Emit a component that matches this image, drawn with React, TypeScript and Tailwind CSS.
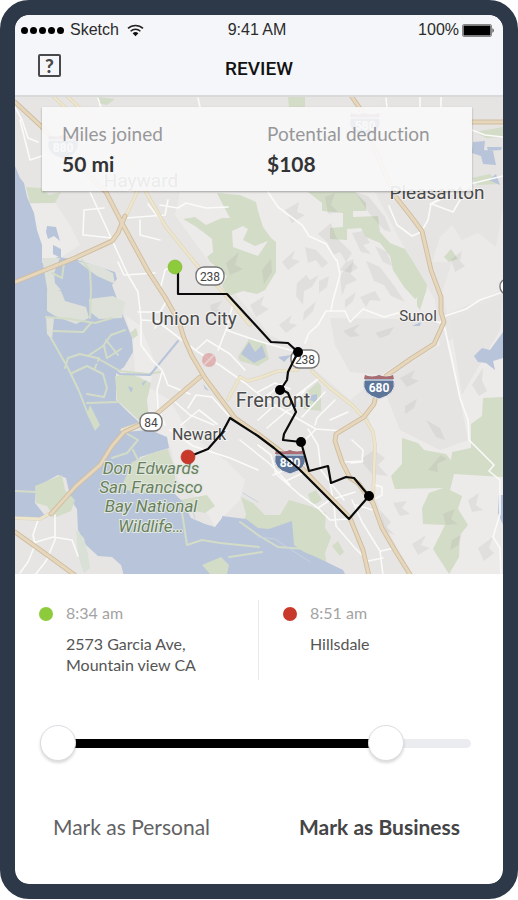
import { useState } from "react";

const MAJOR_ROADS = [
  "M15 102 L42 127 L70 158 L106 192 L123 225 L148 271 L165 297 L179 322 L184 338 L192 356 L205 378 L235 418 L258 434 L300 466 L350 518 L363 550 L369 576",
  "M15 282 L75 258 L112 241 L118 233 L125 216",
  "M200 377 L160 411 L148 421 L124 432 L112 446 L100 465 L76 486 L51 514",
  "M15 532 L50 557 L76 576",
  "M352 97 L363 113 L375 150 L395 196 L410 215 L422 231 L431 270 L441 297 L441 312 L444 322 L434 344 L412 358 L386 376 L376 394 L374 404 L364 417 L336 434 L335 441 L342 462 L350 478 L358 483 L373 503 L382 528 L396 552 L411 576",
  "M472 122 L503 122",
];

const YELLOW_ROADS = [
  "M68 97 L92 120 L128 160 L146 192 L166 227 L200 269 L222 291 L250 325",
  "M54 97 L72 114 M137 192 L125 218",
  "M240 377 L248 381 L262 377 L278 371 L298 370 M312 371 L330 388 L352 405 L366 420 L373 432 L375 445 L373 500",
  "M240 377 L228 399 M15 518 L40 519 L52 512",
  "M148 421 L122 430",
];

const WHITE_ROADS = [
  "M90 192 L107 229 L128 275 L138 292 L141 320 L141 345 L152 360 L162 370 L168 385 L190 394",
  "M83 235 L84 210 L104 208 M84 235 L112 238 M126 218 L165 215 L168 200 M140 220 L140 235 L160 240 M148 204 L162 222",
  "M142 320 L157 321 L178 337 L198 352 L221 366 L245 383 L266 400 L300 420 L316 429 L344 431",
  "M118 262 L124 275 L155 273 M138 312 L160 312 L166 302 M161 286 L165 270 L177 264 M155 328 L162 318",
  "M218 350 L226 330 L233 304 M226 330 L258 341 L297 352 M196 350 L207 340 L230 354 L245 370",
  "M162 372 L157 390 L158 408 L165 425 M175 402 L190 415 L214 425 M188 408 L196 395 L212 397 L229 416 M181 425 L199 410 L217 424 M170 430 L193 446 L230 458 L258 470",
  "M503 292 L480 300 L466 309 L445 316 L440 323 L428 318 L398 313 L384 317 L363 309 L350 322 L345 311 L326 311 L318 325 L309 333 L305 343",
  "M444 325 L452 360 L460 398 L468 420 L469 440 L482 453 L494 465 L489 471 L500 480 L500 514 L493 537 L500 548 L501 575",
  "M337 260 L340 275 L333 300 L331 311 M268 192 L278 207 L302 225 L309 236 L326 244 L336 260",
  "M15 107 L22 120 L28 138 L38 142 M20 120 L30 160 L45 155 M98 98 L101 108 M198 98 L200 107",
  "M386 98 L387 108 M420 107 L420 97 M441 97 L441 107 M389 206 L397 225 L412 236 L421 232 L428 220 L431 204 L450 195 M432 204 L453 212 L460 200 M430 204 L470 184 L503 176 M472 130 L485 135 L503 137",
  "M305 440 L316 429 M315 425 L317 418 L335 400 M302 417 L325 392 M290 410 L305 390 M308 429 L318 445 L321 470 L330 482 L344 500",
  "M258 445 L271 455 L276 474 L300 495 L318 508 L330 500 L355 492 M273 475 L297 465 M286 481 L305 472 M240 440 L270 464 L290 485",
  "M330 483 L334 505 L336 526 L355 548 L367 560 M352 500 L362 522 L380 551 L383 575 M368 561 L383 558 M381 551 L394 548 M318 508 L330 520 L349 519 M345 462 L363 461 M352 440 L363 450 L362 462 L351 463",
  "M375 485 L382 487 L382 495 L373 500 M356 505 L373 510 M258 392 L275 383 L290 389 M259 402 L282 384 M258 420 L275 405 M267 428 L288 410 M330 420 L348 412 M296 396 L318 379",
  "M38 520 L33 535 L35 545 L28 562 L20 573 M55 515 L55 540 L46 561 L35 575 M33 543 L53 537 L72 540 L78 556",
  "M160 205 L178 208 L186 203 L206 208 L228 207",
];

const HILL_SHADES = [
  "M355 192 L368 196 L385 217 L391 232 L384 230 L368 212 Z",
  "M318 234 L331 223 L336 237 L352 253 L346 262 L340 252 L333 255 L328 243 Z",
  "M346 262 L354 259 L351 273 L340 270 Z",
  "M305 247 L316 250 L328 263 L322 268 L316 260 L308 263 Z",
  "M297 283 L306 275 L310 280 L319 275 L312 287 L304 291 L303 305 L296 296 Z",
  "M340 275 L353 262 L358 268 L350 273 L357 280 L346 285 L342 296 Z",
  "M366 261 L380 267 L395 287 L405 302 L391 296 L384 285 L374 281 Z",
  "M360 297 L375 291 L381 301 L370 300 L366 307 Z",
  "M282 262 L295 250 L292 259 L300 261 L288 270 Z",
  "M285 210 L299 202 L297 212 L305 215 L292 223 Z",
  "M360 460 L374 450 L385 458 L378 465 L388 476 L372 474 Z",
  "M428 470 L441 455 L447 459 L437 464 L438 472 Z",
  "M393 503 L407 501 L402 508 L410 514 L400 516 Z",
  "M412 544 L426 535 L421 545 L430 548 L418 555 Z",
  "M472 385 L483 368 L482 381 L487 391 L479 396 Z",
  "M343 331 L360 324 L354 331 L360 336 L350 337 Z",
  "M375 333 L394 327 L389 335 L380 338 Z",
  "M426 420 L440 428 L445 440 L436 437 Z",
  "M451 259 L462 251 L460 261 L465 266 L455 272 Z",
  "M478 548 L493 537 L489 548 L494 553 L484 561 Z",
  "M250 305 L264 296 L261 305 L269 309 L256 317 Z",
  "M279 325 L292 315 L289 323 L297 325 L286 333 Z",
  "M400 378 L415 370 L411 378 L419 381 L407 387 Z",
  "M325 197 L335 193 L331 205 L338 212 L328 214 Z",
  "M352 233 L363 231 L370 243 L363 245 L371 254 L361 252 Z",
  "M375 246 L387 252 L392 266 L383 262 Z",
  "M262 270 L271 259 L272 272 L264 284 Z",
  "M226 263 L239 252 L235 265 L243 269 L230 275 Z",
  "M210 305 L222 301 L217 309 L224 313 L212 316 Z",
  "M304 312 L316 301 L313 311 L303 321 Z",
  "M413 190 L421 185 L420 195 L414 198 Z",
  "M405 406 L417 399 L414 408 L405 414 Z",
  "M443 514 L455 509 L451 519 L458 524 L446 525 Z",
  "M452 540 L462 534 L458 545 L450 550 Z",
  "M468 500 L479 493 L476 505 L483 510 L472 512 Z",
  "M380 510 L391 522 L387 527 L395 535 L384 531 Z",
  "M345 300 L356 292 L353 301 L345 308 Z",
  "M319 281 L329 276 L327 287 L319 293 Z",
];

const GREENS = [
  "M183 219 L195 217 L206 225 L222 218 L230 218 L222 203 L217 193 L240 195 L256 202 L258 211 L263 227 L271 238 L276 242 L276 272 L265 290 L257 294 L243 291 L228 296 L222 286 L227 276 L210 262 L207 257 L213 252 L212 239 L203 232 L195 226 Z",
  "M308 192 L355 192 L366 203 L366 211 L353 211 L353 217 L378 216 L380 232 L390 243 L405 249 L412 260 L427 285 L426 292 L415 299 L404 287 L393 270 L390 256 L380 243 L366 237 L361 228 L347 229 L347 240 L330 239 L330 228 L343 227 L343 213 L322 211 L322 203 Z",
  "M417 298 L426 291 L420 310 L417 306 Z",
  "M288 97 L305 97 L305 107 L289 107 Z M98 97 L115 99 L107 105 L98 103 Z",
  "M26 187 L41 188 L49 195 L61 192 L55 203 L30 203 Z",
  "M180 500 L207 495 L215 506 L205 513 L185 509 Z",
  "M241 497 L253 503 L265 515 L280 515 L289 500 L310 506 L326 513 L325 528 L331 537 L325 553 L328 574 L300 572 L285 558 L258 548 L240 535 L246 514 Z",
  "M402 438 L418 443 L424 450 L446 454 L451 460 L452 452 L471 448 L471 424 L482 416 L483 398 L503 397 L503 477 L454 474 L450 490 L462 496 L458 509 L468 525 L460 535 L459 557 L449 574 L433 549 L445 525 L423 524 L422 508 L429 493 L443 488 L395 489 L391 476 L402 464 Z",
  "M301 397 L318 382 L321 386 L321 411 L304 409 Z",
  "M238 357 L249 339 L265 343 L269 359 L258 366 L240 361 Z",
  "M86 405 L96 414 L101 427 L94 431 L87 419 Z M130 333 L136 328 L138 335 L133 339 Z",
  "M451 249 L458 259 L449 262 L444 257 Z M475 132 L503 127 L503 137 L486 138 Z M472 178 L490 174 L500 184 L477 185 Z",
  "M308 494 L316 490 L322 500 L312 506 Z M332 546 L338 541 L344 552 L340 556 Z",
];

const CLEARINGS = [
  "M232 231 L243 226 L248 229 L243 240 L255 246 L268 241 L258 256 L244 251 L233 247 Z",
];

const WATERS = [
  "M15 166 L20 178 L24 183 L27 197 L34 213 L37 230 L42 245 L42 263 L58 257 L78 260 L96 266 L115 272 L117 279 L112 285 L116 296 L124 318 L132 338 L133 352 L124 367 L116 373 L116 400 L129 413 L140 423 L124 432 L150 430 L167 437 L169 448 L140 457 L130 470 L138 492 L175 494 L184 503 L191 518 L205 524 L215 527 L222 518 L240 532 L258 545 L287 557 L300 566 L332 574 L124 576 L121 565 L112 557 L98 556 L86 545 L78 530 L77 509 L71 500 L66 478 L58 475 L36 487 L35 503 L47 518 L15 518 Z",
  "M222 516 L246 519 L258 528 L269 529 L292 521 L294 545 L304 552 L316 557 L343 570 L346 576 L225 576 Z",
  "M474 356 L482 348 L490 350 L503 332 L503 358 L493 361 L495 370 L486 363 L478 362 Z",
  "M473 142 L485 141 L484 150 L493 151 L496 165 L483 164 L481 156 L472 153 Z M487 147 L502 147 L501 150 L488 151 Z",
  "M489 180 L496 174 L500 185 Z M241 354 L249 342 L255 352 L262 345 L266 357 L254 363 Z",
  "M309 396 L317 394 L317 403 L310 400 Z M278 357 L291 355 L284 362 Z M499 495 L503 495 L503 525 L498 513 Z",
  "M47 226 L56 227 L60 241 L54 236 L48 239 L46 232 Z M53 245 L61 249 L61 258 L53 254 Z",
  "M412 326 L421 322 L420 326 Z M203 384 L209 391 L205 389 Z",
];

const PONDS = [
  "M47 290 L61 291 L65 301 L86 307 L89 318 L76 324 L55 316 L47 311 Z",
  "M89 299 L113 296 L125 302 L122 318 L99 319 L90 312 Z",
  "M46 317 L54 318 L52 340 L47 334 Z",
  "M42 258 L60 258 L54 273 L55 283 L61 290 L48 294 Z",
  "M77 261 L99 266 L113 273 L115 284 L97 276 Z",
];

const MARSHES = [
  "M121 488 L132 462 L155 452 L168 449 L175 470 L175 494 L136 493 Z",
  "M35 486 L62 475 L65 490 L75 500 L71 511 L54 518 L47 506 L36 503 Z",
  "M90 405 L100 425 L95 431 L87 414 Z",
  "M115 376 L131 374 L151 383 L147 400 L149 421 L141 422 L117 400 Z",
  "M202 565 L221 557 L229 565 L227 574 L210 574 Z",
];

const LEVEES = [
  "M46 317 L70 319 L95 323 L112 318",
  "M52 273 L62 278 L64 263 M82 260 L90 271 L91 290 L90 318",
  "M51 338 L60 354 L68 368 L79 391 L88 414",
  "M65 368 L68 358 L80 354 L97 358 L120 371 L148 374 L160 372",
  "M88 356 L103 346 L111 335 L125 330 M104 346 L107 358 L121 349 M106 340 L118 355",
  "M72 373 L87 366 L103 374 L107 388 L104 397 L87 394 M87 403 L119 402",
  "M53 331 L83 332 L91 323 M99 358 L95 368",
  "M124 432 L138 440 L127 453 L112 458 M133 450 L139 462",
  "M181 506 L187 545 L202 540 L220 543 L259 547 M229 557 L262 552",
  "M15 491 L36 492 M240 522 L258 535 L278 547 L320 550",
];

const ROUTE =
  "M178 267 L178 294 L227 294 L271 342 L288 343 L298 352 L288 372 L287 380 L281 389 L288 393 L296 412 L284 434 L283 440 L301 442 L309 471 L328 466 L331 483 L346 477 L354 478 L369 496 L349 519 L298 468 L274 448 L258 436 L230 418 L222 433 L208 449 L188 457";

const STOPS = [
  [298, 352],
  [280, 390],
  [301, 442],
  [369, 496],
];

function RoutePill({ x, y, label, width }: { x: number; y: number; label: string; width: number }) {
  return (
    <g>
      <rect x={x - width / 2} y={y - 9} width={width} height={18} rx={8} fill="#fff" stroke="#777" strokeWidth={1.4} />
      <text x={x} y={y + 5} textAnchor="middle" fontSize={12} fill="#444">
        {label}
      </text>
    </g>
  );
}

function InterstateShield({ x, y, label }: { x: number; y: number; label: string }) {
  return (
    <g transform={`translate(${x} ${y})`}>
      <path d="M-14 -12 Q-7 -9 0 -12 Q7 -9 14 -12 L15 -6 Q18 7 0 12 Q-18 7 -15 -6 Z" fill="#5d7598" stroke="#e8e8ec" />
      <path d="M-14 -12 Q-7 -9 0 -12 Q7 -9 14 -12 L15 -8 L-15 -8 Z" fill="#a96c70" />
      <path d="M-15 -7 H15" stroke="#fff" strokeWidth={1} />
      <text y={5} textAnchor="middle" fontSize={12} fontWeight={700} fill="#fff">
        {label}
      </text>
    </g>
  );
}

function Place({ x, y, size, children }: { x: number; y: number; size: number; children: string }) {
  return (
    <text
      x={x}
      y={y}
      textAnchor="middle"
      fontSize={size}
      fill="#4b4b4b"
      stroke="#f3f2f1"
      strokeWidth={2}
      paintOrder="stroke"
    >
      {children}
    </text>
  );
}

function TripMap() {
  return (
    <svg
      viewBox="15 97 488 477"
      className="block h-auto w-full font-['Roboto',sans-serif]"
      role="img"
      aria-label="Trip route map"
    >
      <rect x={15} y={97} width={488} height={477} fill="#e6e5e4" />
      <path d="M180 192 L375 192 L400 240 L435 300 L440 345 L375 380 L350 400 L310 365 L290 345 L270 335 L215 270 L175 215 Z" fill="#ecebe9" />
      <path d="M382 395 L420 365 L450 340 L503 297 L503 574 L412 574 L385 525 L375 495 L376 440 L368 415 Z" fill="#ecebe9" />
      <path d="M330 318 L440 320 L432 345 L380 375 L350 372 L335 345 Z M380 97 L503 97 L503 262 L432 262 L395 192 Z M450 320 L503 296 L500 330 L462 395 Z M382 385 L436 350 L446 340 L460 400 L468 440 L440 450 L400 430 Z" fill="#e5e4e3" />
      <path d="M452 262 L503 262 L503 290 L447 314 L442 292 Z M440 237 L452 225 L462 240 L478 233 L496 247 L503 208 L503 262 L432 262 Z" fill="#ebeae8" />
      <path d="M30 204 L55 203 L70 225 L80 245 L60 258 L42 258 Z M145 385 L170 400 L190 435 L225 460 L245 480 L240 500 L222 518 L215 527 L200 500 L178 480 L170 445 L150 425 Z" fill="#ecebe9" />
      <path d="M125 315 L140 325 L155 362 L150 385 L135 372 L133 340 Z" fill="#ecebe9" />
      {GREENS.map((d) => (
        <path key={d} d={d} fill="#d3dcc7" />
      ))}
      {CLEARINGS.map((d) => (
        <path key={d} d={d} fill="#ecebe9" />
      ))}
      {WATERS.map((d) => (
        <path key={d} d={d} fill="#b8c4d9" />
      ))}
      {PONDS.map((d) => (
        <path key={d} d={d} fill="#dde1d9" />
      ))}
      {MARSHES.map((d) => (
        <path key={d} d={d} fill="#d3dcc7" />
      ))}
      <path d="M128 386 L133 388 L131 393 Z M142 383 L147 380 L143 386 Z" fill="#b8c4d9" />
      <path d="M76 530 L84 538 L88 555 L90 568 L84 573 L78 555 Z" fill="#d9e0d6" />
      {HILL_SHADES.map((d) => (
        <path key={d} d={d} fill="#8c8c8c" fillOpacity={0.12} />
      ))}
      <g fill="none" strokeLinejoin="round" strokeLinecap="round">
        {LEVEES.map((d) => (
          <path key={d} d={d} stroke="#d3dcc7" strokeWidth={2} />
        ))}
        <path d="M72 370 L80 359 L96 362 L120 374 L150 375 L178 341" stroke="#b8c4d9" strokeWidth={2} />
        <path d="M190 503 L195 518 M243 493 L258 502 M258 537 L275 539 L310 562" stroke="#c9d2df" strokeWidth={1} />
        {WHITE_ROADS.map((d) => (
          <path key={d} d={d} stroke="#fafaf9" strokeWidth={1.6} />
        ))}
        {YELLOW_ROADS.map((d) => (
          <path key={d} d={d} stroke="#ddd5bd" strokeWidth={3.6} />
        ))}
        {YELLOW_ROADS.map((d) => (
          <path key={d} d={d} stroke="#eee6cc" strokeWidth={2.4} />
        ))}
        {MAJOR_ROADS.map((d) => (
          <path key={d} d={d} stroke="#cfbd9f" strokeWidth={4.8} />
        ))}
        {MAJOR_ROADS.map((d) => (
          <path key={d} d={d} stroke="#e6d6bb" strokeWidth={3} />
        ))}
      </g>
      <circle cx={209} cy={360} r={7} fill="#dda9a9" fillOpacity={0.85} />
      <path d="M204 365 L214 355" stroke="#e9cccc" strokeWidth={2} />

      <RoutePill x={210} y={276} label="238" width={28} />
      <RoutePill x={305} y={359} label="238" width={28} />
      <RoutePill x={151} y={422} label="84" width={22} />
      <rect x={500} y={279} width={20} height={15} rx={7} fill="#fff" stroke="#777" strokeWidth={1.4} />
      <InterstateShield x={379} y={387} label="680" />
      <InterstateShield x={290} y={462} label="880" />
      <InterstateShield x={63} y={147} label="880" />
      <InterstateShield x={365} y={125} label="580" />

      <Place x={141} y={187} size={19}>Hayward</Place>
      <Place x={437} y={199} size={19}>Pleasanton</Place>
      <Place x={194} y={325} size={19}>Union City</Place>
      <Place x={418} y={321} size={15}>Sunol</Place>
      <Place x={273} y={407} size={20}>Fremont</Place>
      <Place x={199} y={440} size={16}>Newark</Place>
      <text
        textAnchor="middle"
        fontSize={17}
        fontStyle="italic"
        fill="#68805c"
        stroke="#e3e9e2"
        strokeWidth={2}
        paintOrder="stroke"
      >
        <tspan x={151} y={474}>Don Edwards</tspan>
        <tspan x={151} y={493}>San Francisco</tspan>
        <tspan x={151} y={512}>Bay National</tspan>
        <tspan x={151} y={532}>Wildlife…</tspan>
      </text>

      <path d={ROUTE} fill="none" stroke="#0b0b0b" strokeWidth={2.2} strokeLinejoin="round" />
      {STOPS.map(([x, y]) => (
        <circle key={y} cx={x} cy={y} r={5} fill="#000" />
      ))}
      <circle cx={175} cy={267} r={7} fill="#8ecb3c" stroke="#79b32c" strokeWidth={0.6} />
      <circle cx={188} cy={457} r={7} fill="#c8392c" stroke="#b03226" strokeWidth={0.6} />
    </svg>
  );
}

function StatusBar() {
  return (
    <div className="grid h-[30px] grid-cols-3 items-center pr-2 pl-[6px] font-['Liberation_Sans',sans-serif] text-base text-[#2b2b2c]">
      <div className="flex items-center">
        <div className="flex gap-[2px]">
          {[0, 1, 2, 3, 4].map((n) => (
            <span key={n} className="size-[7px] rounded-full bg-black" />
          ))}
        </div>
        <span className="ml-[6px]">Sketch</span>
        <svg viewBox="0 0 17 13" className="ml-2 h-[13px] w-[17px]" aria-hidden="true">
          <g fill="none" stroke="#222" strokeWidth={1.5}>
            <path d="M1 4.4 A11 11 0 0 1 16 4.4" />
            <path d="M3.6 7.2 A7 7 0 0 1 13.4 7.2" />
          </g>
          <path d="M5.6 9.2 A4.4 4.4 0 0 1 11.4 9.2 L8.5 12.2 Z" fill="#111" />
        </svg>
      </div>
      <span className="pr-[2px] text-center">9:41 AM</span>
      <div className="flex items-center justify-end gap-[3px]">
        <span>100%</span>
        <svg viewBox="0 0 33 13" className="h-[13px] w-[33px]" aria-hidden="true">
          <rect x={0.5} y={0.5} width={29} height={12} rx={1.5} fill="#f5f6f9" stroke="#888" />
          <rect x={1.5} y={1.5} width={27} height={10} fill="#000" />
          <path d="M30.5 4 Q33 6.5 30.5 9 Z" fill="#333" />
        </svg>
      </div>
    </div>
  );
}

function Stop({ color, time, lines }: { color: string; time: string; lines: string[] }) {
  return (
    <div className="flex gap-[13px] pl-6">
      <span className={`mt-[7px] size-[14px] shrink-0 rounded-full ${color}`} />
      <div className="pb-[5px] text-base">
        <div className="leading-[26px] text-[#a3a3a3]">{time}</div>
        <address className="mt-[7px] leading-[21px] text-[#555] not-italic">
          {lines.map((line) => (
            <div key={line}>{line}</div>
          ))}
        </address>
      </div>
    </div>
  );
}

const THUMB =
  "pointer-events-none absolute inset-0 m-0 h-9 w-full appearance-none bg-transparent outline-none [&::-webkit-slider-thumb]:pointer-events-auto [&::-webkit-slider-thumb]:size-9 [&::-webkit-slider-thumb]:appearance-none [&::-webkit-slider-thumb]:rounded-full [&::-webkit-slider-thumb]:border [&::-webkit-slider-thumb]:border-[#dcdce2] [&::-webkit-slider-thumb]:bg-white [&::-webkit-slider-thumb]:shadow-[0_2px_3px_rgba(0,0,0,0.15)]";

function TripRange() {
  const [from, setFrom] = useState(0);
  const [to, setTo] = useState(83);
  return (
    <div className="relative mt-[45px] mr-8 ml-[25px] flex h-9 items-center">
      <div className="h-[9px] w-full rounded-full bg-[#ebecf0] px-[18px]">
        <div className="h-[9px] bg-black" style={{ marginLeft: `${from}%`, width: `${to - from}%` }} />
      </div>
      <input
        type="range"
        aria-label="Trip start"
        value={from}
        onChange={(e) => setFrom(Math.min(Number(e.target.value), to))}
        className={THUMB}
      />
      <input
        type="range"
        aria-label="Trip end"
        value={to}
        onChange={(e) => setTo(Math.max(Number(e.target.value), from))}
        className={THUMB}
      />
    </div>
  );
}

export default function App() {
  return (
    <main className="overflow-hidden rounded-[29px] border-[15px] border-[#2d3949] bg-[#2d3949] font-['Lato',sans-serif] [font-variant-ligatures:none]">
      <div className="overflow-hidden rounded-[14px] bg-white">
        <header className="border-b-2 border-[#d9d9da] bg-[#f5f6f9]">
          <StatusBar />
          <div className="grid h-[50px] grid-cols-[1fr_auto_1fr] items-start px-[23px]">
            <button
              type="button"
              aria-label="Help"
              className="mt-[9px] flex size-[23px] items-center justify-center rounded-[2px] border-2 border-[#49494b] text-[19px] leading-none font-black text-[#49494b]"
            >
              ?
            </button>
            <h1 className="pt-[10px] font-['Roboto',sans-serif] text-[19px] leading-7 font-medium text-[#121212]">
              REVIEW
            </h1>
          </div>
        </header>

        <section className="relative">
          <TripMap />
          <dl className="absolute top-[10px] right-[31px] left-[27px] grid grid-cols-2 bg-[#f8f8f8]/92 py-[15px] pl-5 shadow-[0_1px_2px_rgba(0,0,0,0.3)]">
            <div>
              <dt className="text-[19px] leading-6 text-[#97979a]">Miles joined</dt>
              <dd className="mt-[6px] text-[21px] leading-6 font-bold text-[#333336]">50 mi</dd>
            </div>
            <div>
              <dt className="text-[19px] leading-6 text-[#97979a]">Potential deduction</dt>
              <dd className="mt-[6px] text-[21px] leading-6 font-bold text-[#333336]">$108</dd>
            </div>
          </dl>
        </section>

        <section className="grid grid-cols-2 divide-x divide-[#e9e9ec] pt-[26px]">
          <Stop color="bg-[#8ecb3c]" time="8:34 am" lines={["2573 Garcia Ave,", "Mountain view CA"]} />
          <Stop color="bg-[#c8392c]" time="8:51 am" lines={["Hillsdale"]} />
        </section>

        <TripRange />

        <div className="flex justify-between pt-[52px] pr-[43px] pb-[43px] pl-[38px] text-[21px] leading-7">
          <button type="button" className="text-[#626264]">
            Mark as Personal
          </button>
          <button type="button" className="font-bold text-[#454547]">
            Mark as Business
          </button>
        </div>
      </div>
    </main>
  );
}
